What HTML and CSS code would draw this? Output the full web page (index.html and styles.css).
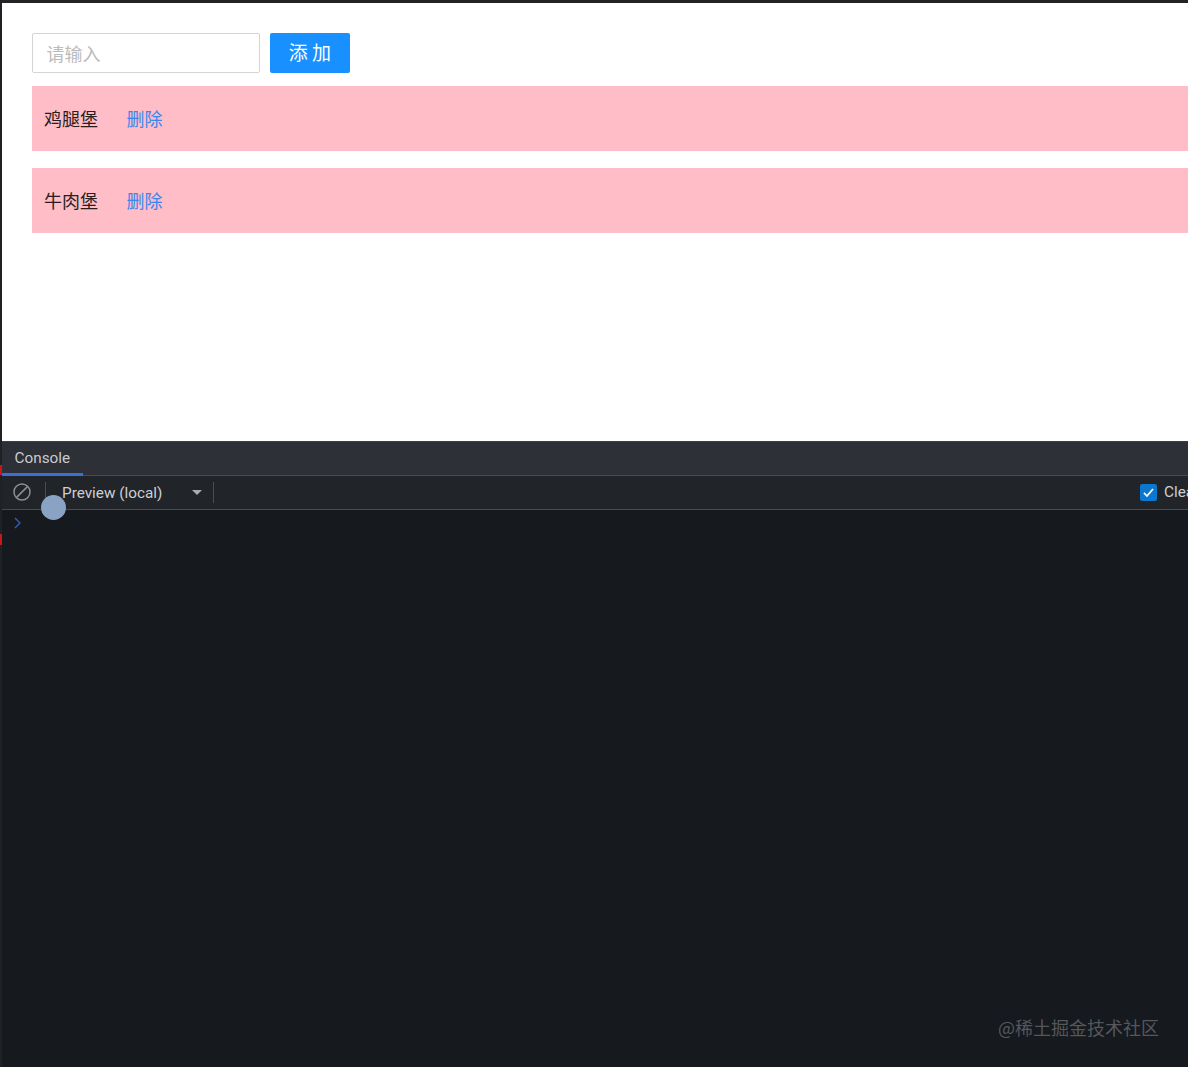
FILE: index.html
```html
<!DOCTYPE html>
<html lang="zh">
<head>
<meta charset="utf-8">
<title>Preview</title>
<link rel="stylesheet" href="styles.css">
</head>
<body>
<div class="app">
  <main class="preview">
    <div class="form">
      <input class="field" type="text" placeholder="请输入">
      <button class="add" type="button"><span class="add-label">添 加</span></button>
    </div>
    <div class="item"><span class="name">鸡腿堡</span><a class="del">删除</a></div>
    <div class="item"><span class="name">牛肉堡</span><a class="del">删除</a></div>
  </main>
  <section class="console">
    <div class="tabs"><div class="tab">Console</div></div>
    <div class="toolbar">
      <svg class="clear" width="20" height="20" viewBox="0 0 20 20"><circle cx="10" cy="10" r="8" fill="none" stroke="#8b8e92" stroke-width="1.5"/><path d="M4.6 15.4 15.4 4.6" stroke="#8b8e92" stroke-width="1.5"/></svg>
      <span class="sep first"></span>
      <span class="context">Preview (local)</span>
      <span class="caret"></span>
      <span class="sep"></span>
      <span class="spring"></span>
      <span class="check"><svg width="17" height="17" viewBox="0 0 17 17"><path d="M4 8.8 7 12l6-7" fill="none" stroke="#fff" stroke-width="1.7"/></svg></span>
      <span class="clearlabel">Clear</span>
    </div>
    <div class="output">
      <svg class="prompt" width="10" height="12" viewBox="0 0 10 12"><path d="M2 1l5 5-5 5" fill="none" stroke="#3a62c4" stroke-width="1.2"/></svg>
    </div>
    <div class="mark">@稀土掘金技术社区</div>
  </section>
  <span class="red red-a"></span>
  <span class="red red-b"></span>
  <span class="touch"></span>
</div>
</body>
</html>
```
FILE: styles.css
```css
* { box-sizing: border-box; }
html, body { margin: 0; height: 100%; }
body { background: #fff; overflow: hidden; font-family: "Liberation Sans", "Noto Sans CJK SC", sans-serif; }
.app { position: relative; width: 1188px; height: 1067px; overflow: hidden; display: flex; flex-direction: column; padding-left: 2px; background: #202124; }
.preview { height: 441px; flex: none; background: #fff; border-top: 3px solid #222325; padding: 30px 0 0 30px; width: 1186px; }
.form { display: flex; gap: 10px; height: 40px; margin-bottom: 13px; }
.field { width: 228px; height: 40px; border: 1px solid #d4d4d4; border-radius: 2px; padding: 0 13.5px; font: 18px/38px "Noto Sans CJK SC", sans-serif; background: #fff; outline: none; }
.field::placeholder { color: #bcbcbc; opacity: 1; }
.add { width: 80px; height: 40px; border: 0; border-radius: 2px; background: #1890ff; color: #fff; font: 19px/38px "Noto Sans CJK SC", sans-serif; padding: 0 0 2px; }
.add-label { display: block; line-height: 38px; }
.item { height: 65px; background: #ffbdc7; margin-bottom: 17px; padding: 0 0 1px 12px; display: flex; align-items: center; font: 18px/24px "Noto Sans CJK SC", sans-serif; }
.name { color: #2a1d20; width: 83px; }
.del { color: #3a85f0; margin-left: -0.5px; }
.console { flex: 1; display: flex; flex-direction: column; background: #16191e; position: relative; color: #d0d2d5; font-family: Roboto, "Liberation Sans", sans-serif; }
.tabs { height: 35px; flex: none; background: #2d3037; border-top: 1px solid #3c3f45; border-bottom: 1px solid #484b50; }
.tab { width: 81px; height: 34px; padding: 6px 0 0 12.5px; font-size: 15.3px; line-height: 20px; color: #c9cbce; border-bottom: 3px solid #3a6fd8; }
.toolbar { height: 34px; flex: none; background: #212429; border-bottom: 1px solid #484b50; display: flex; align-items: center; padding-left: 10px; white-space: nowrap; font-size: 15.3px; }
.clear { flex: none; margin-top: -2px; }
.sep { width: 1px; height: 21px; background: #4a4d52; flex: none; }
.sep.first { margin-left: 13px; }
.context { margin-left: 16px; width: 130px; color: #cdcfd2; flex: none; }
.caret { width: 0; height: 0; border: 5px solid transparent; border-top: 5px solid #a9abae; border-bottom: 0; flex: none; margin-right: 11px; }
.spring { flex: 1; }
.check { width: 17px; height: 17px; background: #0a78d0; border-radius: 2px; flex: none; display: flex; }
.clearlabel { width: 34px; margin-left: 7px; margin-right: -10px; margin-top: -2px; flex: none; overflow: hidden; color: #cdcfd2; }
.output { flex: 1; padding: 7px 0 0 11px; }
.prompt { display: block; }
.mark { position: absolute; right: 29px; bottom: 28px; font: 18px/24px "Noto Sans CJK SC", sans-serif; color: #54575c; }
.red { position: absolute; left: 0; width: 2px; background: #c8161c; }
.red-a { top: 465px; height: 10px; }
.red-b { top: 534px; height: 11px; }
.touch { position: absolute; left: 41px; top: 495px; width: 25px; height: 25px; border-radius: 50%; background: #8aa2c4; }
```
